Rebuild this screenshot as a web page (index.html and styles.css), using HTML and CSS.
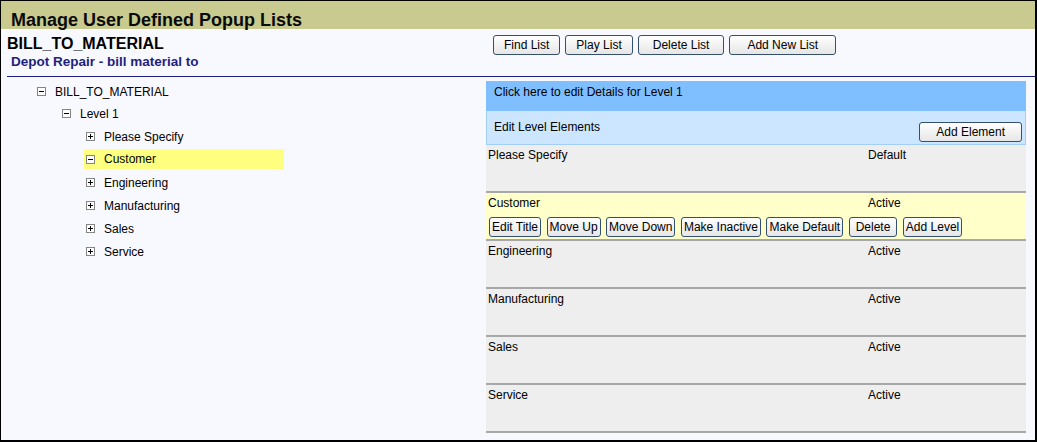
FILE: index.html
```html
<html>
  <head>
    <meta charset="utf-8" />
    <link rel="stylesheet" href="styles.css">
  </head>
  <body>
    <div class="popupLists">
      <h1 class="popupLists__title">Manage User Defined Popup Lists</h1>

      <div class="listHeader">
        <div class="listHeader__info">
          <div class="listHeader__name">BILL_TO_MATERIAL</div>
          <div class="listHeader__desc">Depot Repair - bill material to</div>
        </div>
        <div class="listHeader__actions">
          <button class="button button--toolbar" type="button">Find List</button>
          <button class="button button--toolbar" type="button">Play List</button>
          <button class="button button--toolbar button--wide" type="button">Delete List</button>
          <button class="button button--toolbar button--wider" type="button">Add New List</button>
        </div>
      </div>

      <div class="listBody">
        <ul class="tree">
          <li class="tree__item tree__item--root">
            <div class="tree__row">
              <svg class="tree__icon" width="9" height="9" viewBox="0 0 9 9"><rect x=".5" y=".5" width="8" height="8" fill="#fff" stroke="#848484"/><path d="M2 4.5h5" stroke="#000"/></svg>
              <span>BILL_TO_MATERIAL</span>
            </div>
            <ul class="tree__children">
              <li class="tree__item">
                <div class="tree__row">
                  <svg class="tree__icon" width="9" height="9" viewBox="0 0 9 9"><rect x=".5" y=".5" width="8" height="8" fill="#fff" stroke="#848484"/><path d="M2 4.5h5" stroke="#000"/></svg>
                  <span>Level 1</span>
                </div>
                <ul class="tree__children tree__children--leaf">
                  <li class="tree__item">
                    <div class="tree__row">
                      <svg class="tree__icon" width="9" height="9" viewBox="0 0 9 9"><rect x=".5" y=".5" width="8" height="8" fill="#fff" stroke="#848484"/><path d="M2 4.5h5M4.5 2v5" stroke="#000"/></svg>
                      <span>Please Specify</span>
                    </div>
                  </li>
                  <li class="tree__item">
                    <div class="tree__row tree__row--selected">
                      <svg class="tree__icon" width="9" height="9" viewBox="0 0 9 9"><rect x=".5" y=".5" width="8" height="8" fill="#fff" stroke="#848484"/><path d="M2 4.5h5" stroke="#000"/></svg>
                      <span>Customer</span>
                    </div>
                  </li>
                  <li class="tree__item">
                    <div class="tree__row">
                      <svg class="tree__icon" width="9" height="9" viewBox="0 0 9 9"><rect x=".5" y=".5" width="8" height="8" fill="#fff" stroke="#848484"/><path d="M2 4.5h5M4.5 2v5" stroke="#000"/></svg>
                      <span>Engineering</span>
                    </div>
                  </li>
                  <li class="tree__item">
                    <div class="tree__row">
                      <svg class="tree__icon" width="9" height="9" viewBox="0 0 9 9"><rect x=".5" y=".5" width="8" height="8" fill="#fff" stroke="#848484"/><path d="M2 4.5h5M4.5 2v5" stroke="#000"/></svg>
                      <span>Manufacturing</span>
                    </div>
                  </li>
                  <li class="tree__item">
                    <div class="tree__row">
                      <svg class="tree__icon" width="9" height="9" viewBox="0 0 9 9"><rect x=".5" y=".5" width="8" height="8" fill="#fff" stroke="#848484"/><path d="M2 4.5h5M4.5 2v5" stroke="#000"/></svg>
                      <span>Sales</span>
                    </div>
                  </li>
                  <li class="tree__item">
                    <div class="tree__row">
                      <svg class="tree__icon" width="9" height="9" viewBox="0 0 9 9"><rect x=".5" y=".5" width="8" height="8" fill="#fff" stroke="#848484"/><path d="M2 4.5h5M4.5 2v5" stroke="#000"/></svg>
                      <span>Service</span>
                    </div>
                  </li>
                </ul>
              </li>
            </ul>
          </li>
        </ul>

        <div class="levelPanel">
          <div class="levelPanel__details">Click here to edit Details for Level 1</div>
          <div class="levelPanel__bar">
            <span>Edit Level Elements</span>
            <button class="button button--add" type="button">Add Element</button>
          </div>

          <div class="element">
            <div class="element__line">
              <span class="element__name">Please Specify</span>
              <span class="element__status">Default</span>
            </div>
          </div>
          <div class="element element--selected">
            <div class="element__line">
              <span class="element__name">Customer</span>
              <span class="element__status">Active</span>
            </div>
            <div class="element__actions">
              <button class="button button--small" type="button">Edit Title</button>
              <button class="button button--small" type="button">Move Up</button>
              <button class="button button--small" type="button">Move Down</button>
              <button class="button button--small" type="button">Make Inactive</button>
              <button class="button button--small" type="button">Make Default</button>
              <button class="button button--small button--delete" type="button">Delete</button>
              <button class="button button--small" type="button">Add Level</button>
            </div>
          </div>
          <div class="element">
            <div class="element__line">
              <span class="element__name">Engineering</span>
              <span class="element__status">Active</span>
            </div>
          </div>
          <div class="element">
            <div class="element__line">
              <span class="element__name">Manufacturing</span>
              <span class="element__status">Active</span>
            </div>
          </div>
          <div class="element">
            <div class="element__line">
              <span class="element__name">Sales</span>
              <span class="element__status">Active</span>
            </div>
          </div>
          <div class="element">
            <div class="element__line">
              <span class="element__name">Service</span>
              <span class="element__status">Active</span>
            </div>
          </div>
        </div>
      </div>
    </div>
  </body>
</html>
```

FILE: styles.css
```css
body {
	margin: 0;
	font-family: "Liberation Sans", Arial, sans-serif;
	font-size: 12px;
	color: #000;
}

.popupLists {
	box-sizing: border-box;
	width: 1037px;
	height: 442px;
	border-style: solid;
	border-color: #000;
	border-width: 1px 2px 2px 1px;
	background-color: #f8f8ff;
	display: flex;
	flex-direction: column;
}

.popupLists__title {
	box-sizing: border-box;
	margin: 0;
	height: 28px;
	padding: 9px 0 0 10px;
	font-size: 18px;
	line-height: 20px;
	font-weight: bold;
	color: #0a0a0a;
	background-color: #c8ca90;
}

/* list name and toolbar */
.listHeader {
	display: flex;
	margin-left: 6px;
	border-bottom: 1px solid #1f1f80;
}

.listHeader__info {
	width: 479px;
	padding: 6px 0 6px;
}

.listHeader__name {
	font-size: 16px;
	line-height: 18px;
	font-weight: bold;
}

.listHeader__desc {
	margin-top: 1px;
	padding-left: 4px;
	font-size: 13.5px;
	line-height: 16px;
	font-weight: bold;
	color: #1f1f80;
}

.listHeader__actions {
	display: flex;
	gap: 5px;
	align-items: flex-start;
	padding-top: 6px;
	margin-left: 7px;
}

.button {
	box-sizing: border-box;
	-webkit-appearance: none;
	appearance: none;
	font-family: "Liberation Sans", Arial, sans-serif;
	font-size: 12px;
	color: #000;
	height: 20px;
	line-height: 18px;
	padding: 0 10px;
	border: 1px solid #34506e;
	border-radius: 3px;
	background: linear-gradient(#ffffff, #e6e6e6);
	cursor: pointer;
}

.button--wide {
	padding: 0 14px;
}

.button--wider {
	padding: 0 17px;
}

.button--add {
	padding: 0 16px;
	margin-top: 2px;
}

.button--small {
	padding: 0 2px;
}

.button--delete {
	padding: 0 6px;
}

/* tree and panel */
.listBody {
	flex: 1;
	display: flex;
	align-items: flex-start;
}

.tree {
	list-style: none;
	margin: 0;
	padding: 4px 0 0 36px;
	width: 449px;
}

.tree__children {
	list-style: none;
	margin: 0;
	padding: 0 0 0 25px;
}

.tree__children--leaf {
	padding-left: 24px;
}

.tree__row {
	display: flex;
	align-items: center;
	height: 23px;
}

.tree__item--root > .tree__row {
	height: 21px;
}

.tree__icon {
	flex: none;
	margin-right: 9px;
}

.tree__row--selected {
	box-sizing: border-box;
	width: 200px;
	height: 20px;
	margin: 1px 0 2px -2px;
	padding-left: 2px;
	background-color: #ffff80;
}

.levelPanel {
	width: 540px;
	margin-top: 4px;
}

.levelPanel__details {
	box-sizing: border-box;
	height: 30px;
	padding: 4px 8px 0;
	line-height: 14px;
	background-color: #80bfff;
	cursor: pointer;
}

.levelPanel__bar {
	box-sizing: border-box;
	height: 34px;
	display: flex;
	align-items: flex-start;
	justify-content: space-between;
	padding: 9px 3px 0 7px;
	line-height: 14px;
	background-color: #cce6ff;
	border: 1px solid #a2cff8;
	border-top: none;
}

.element {
	box-sizing: border-box;
	min-height: 48px;
	padding: 3px 0 0 2px;
	background-color: #eeeeee;
	border-bottom: 2px solid #a8a8a8;
}

.element--selected {
	background-color: #ffffca;
}

.element__line {
	display: flex;
	line-height: 14px;
}

.element__name {
	width: 380px;
}

.element__actions {
	display: flex;
	gap: 5.5px;
	margin-top: 7px;
	padding-left: 1px;
}
```
